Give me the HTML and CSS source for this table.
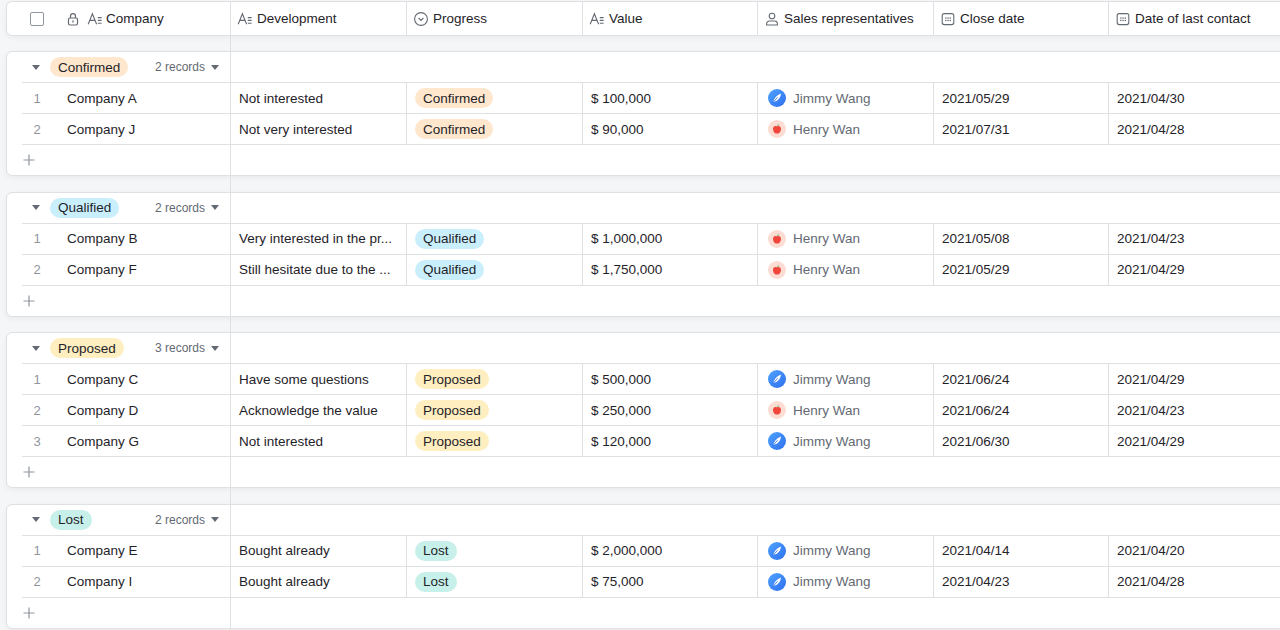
FILE: index.html
```html
<!DOCTYPE html>
<html lang="en">
<head>
<meta charset="utf-8">
<title>Sales pipeline</title>
<link rel="stylesheet" href="styles.css">
</head>
<body>
<div class="sheet">
  <div class="head">
    <div class="hl">
      <span class="chk"></span>
      <svg class="lock" width="12" height="14" viewBox="0 0 12 14"><rect x="1.5" y="6" width="9" height="7" rx="1.5" fill="none" stroke="#646a73" stroke-width="1.2"/><path d="M3.5 6V4.2a2.5 2.5 0 0 1 5 0V6" fill="none" stroke="#646a73" stroke-width="1.2"/><rect x="5.4" y="8.4" width="1.2" height="2.2" fill="#646a73"/></svg>
      <svg class="ic" width="16" height="16" viewBox="0 0 16 16"><path d="M1.2 13.2L5.4 2.8L9.6 13.2M2.8 9.4H8" fill="none" stroke="#646a73" stroke-width="1.1"/><path d="M10.8 6.6H14.6M10.8 9.4H14.6M10.8 12.2H14.6" stroke="#646a73" stroke-width="1.1"/></svg>
      <span>Company</span>
    </div>
    <div class="hc w177">
      <svg class="ic" width="16" height="16" viewBox="0 0 16 16"><path d="M1.2 13.2L5.4 2.8L9.6 13.2M2.8 9.4H8" fill="none" stroke="#646a73" stroke-width="1.1"/><path d="M10.8 6.6H14.6M10.8 9.4H14.6M10.8 12.2H14.6" stroke="#646a73" stroke-width="1.1"/></svg>
      <span>Development</span>
    </div>
    <div class="hc w176">
      <svg class="ic" width="16" height="16" viewBox="0 0 16 16"><circle cx="8" cy="8" r="6.4" fill="none" stroke="#646a73" stroke-width="1.1"/><path d="M5.6 7L8 9.4L10.4 7" fill="none" stroke="#646a73" stroke-width="1.1"/></svg>
      <span>Progress</span>
    </div>
    <div class="hc w175">
      <svg class="ic" width="16" height="16" viewBox="0 0 16 16"><path d="M1.2 13.2L5.4 2.8L9.6 13.2M2.8 9.4H8" fill="none" stroke="#646a73" stroke-width="1.1"/><path d="M10.8 6.6H14.6M10.8 9.4H14.6M10.8 12.2H14.6" stroke="#646a73" stroke-width="1.1"/></svg>
      <span>Value</span>
    </div>
    <div class="hc w176">
      <svg class="ic" width="16" height="16" viewBox="0 0 16 16"><circle cx="8" cy="5" r="2.8" fill="none" stroke="#646a73" stroke-width="1.1"/><path d="M2.6 14V12.8a2.8 2.8 0 0 1 2.8-2.8h5.2a2.8 2.8 0 0 1 2.8 2.8V14Z" fill="none" stroke="#646a73" stroke-width="1.1"/></svg>
      <span>Sales representatives</span>
    </div>
    <div class="hc w175">
      <svg class="ic" width="16" height="16" viewBox="0 0 16 16"><rect x="2.2" y="2.6" width="11.6" height="11" rx="2" fill="none" stroke="#646a73" stroke-width="1.1"/><g fill="#646a73"><rect x="5.2" y="6.4" width="1.3" height="1.3"/><rect x="7.4" y="6.4" width="1.3" height="1.3"/><rect x="9.6" y="6.4" width="1.3" height="1.3"/><rect x="5.2" y="8.8" width="1.3" height="1.3"/><rect x="7.4" y="8.8" width="1.3" height="1.3"/><rect x="9.6" y="8.8" width="1.3" height="1.3"/></g></svg>
      <span>Close date</span>
    </div>
    <div class="hc wrest">
      <svg class="ic" width="16" height="16" viewBox="0 0 16 16"><rect x="2.2" y="2.6" width="11.6" height="11" rx="2" fill="none" stroke="#646a73" stroke-width="1.1"/><g fill="#646a73"><rect x="5.2" y="6.4" width="1.3" height="1.3"/><rect x="7.4" y="6.4" width="1.3" height="1.3"/><rect x="9.6" y="6.4" width="1.3" height="1.3"/><rect x="5.2" y="8.8" width="1.3" height="1.3"/><rect x="7.4" y="8.8" width="1.3" height="1.3"/><rect x="9.6" y="8.8" width="1.3" height="1.3"/></g></svg>
      <span>Date of last contact</span>
    </div>
  </div>

  <!-- Group: Confirmed -->
  <div class="group">
    <div class="ghead">
      <div class="gl">
        <svg class="caret" width="8" height="5" viewBox="0 0 8 5"><path d="M0 0H8L4 5Z" fill="#646a73"/></svg>
        <span class="pill confirmed">Confirmed</span>
        <span class="records">2 records</span>
        <svg class="caret2" width="8" height="5" viewBox="0 0 8 5"><path d="M0 0H8L4 5Z" fill="#646a73"/></svg>
      </div>
    </div>
    <div class="row">
      <div class="lc"><span class="num">1</span><span class="name">Company A</span></div>
      <div class="c w177 dev">Not interested</div>
      <div class="c w176"><span class="pill confirmed">Confirmed</span></div>
      <div class="c w175">$ 100,000</div>
      <div class="c w176 rep"><span class="av jimmy"><svg width="18" height="18" viewBox="0 0 18 18"><path d="M5.2 13.2C6 9.4 8.6 6 13 4.4C12.6 8.6 10 11.8 6.4 12.6Z" fill="#fff"/><path d="M4.6 14L9.6 8.2" stroke="#2f6fe8" stroke-width="0.8"/></svg></span>Jimmy Wang</div>
      <div class="c w175">2021/05/29</div>
      <div class="c wrest">2021/04/30</div>
    </div>
    <div class="row">
      <div class="lc"><span class="num">2</span><span class="name">Company J</span></div>
      <div class="c w177 dev">Not very interested</div>
      <div class="c w176"><span class="pill confirmed">Confirmed</span></div>
      <div class="c w175">$ 90,000</div>
      <div class="c w176 rep"><span class="av henry"><svg width="18" height="18" viewBox="0 0 18 18"><path d="M9 6.4C7.2 5.3 5 6.2 5 9C5 11.6 6.8 13.6 8.1 13.6C8.6 13.6 8.8 13.4 9 13.4C9.2 13.4 9.4 13.6 9.9 13.6C11.2 13.6 13 11.6 13 9C13 6.2 10.8 5.3 9 6.4Z" fill="#f0463b"/><path d="M9 6.4C9.2 5.3 9.9 4.4 11 4.2C10.8 5.3 10.1 6 9 6.4Z" fill="#3aa655"/></svg></span>Henry Wan</div>
      <div class="c w175">2021/07/31</div>
      <div class="c wrest">2021/04/28</div>
    </div>
    <div class="addrow">
      <div class="al"><svg width="12" height="12" viewBox="0 0 12 12"><path d="M6 0.5V11.5M0.5 6H11.5" stroke="#8f959e" stroke-width="1.2"/></svg></div>
      <div class="ar"></div>
    </div>
  </div>

  <!-- Group: Qualified -->
  <div class="group">
    <div class="ghead">
      <div class="gl">
        <svg class="caret" width="8" height="5" viewBox="0 0 8 5"><path d="M0 0H8L4 5Z" fill="#646a73"/></svg>
        <span class="pill qualified">Qualified</span>
        <span class="records">2 records</span>
        <svg class="caret2" width="8" height="5" viewBox="0 0 8 5"><path d="M0 0H8L4 5Z" fill="#646a73"/></svg>
      </div>
    </div>
    <div class="row">
      <div class="lc"><span class="num">1</span><span class="name">Company B</span></div>
      <div class="c w177 dev">Very interested in the pr...</div>
      <div class="c w176"><span class="pill qualified">Qualified</span></div>
      <div class="c w175">$ 1,000,000</div>
      <div class="c w176 rep"><span class="av henry"><svg width="18" height="18" viewBox="0 0 18 18"><path d="M9 6.4C7.2 5.3 5 6.2 5 9C5 11.6 6.8 13.6 8.1 13.6C8.6 13.6 8.8 13.4 9 13.4C9.2 13.4 9.4 13.6 9.9 13.6C11.2 13.6 13 11.6 13 9C13 6.2 10.8 5.3 9 6.4Z" fill="#f0463b"/><path d="M9 6.4C9.2 5.3 9.9 4.4 11 4.2C10.8 5.3 10.1 6 9 6.4Z" fill="#3aa655"/></svg></span>Henry Wan</div>
      <div class="c w175">2021/05/08</div>
      <div class="c wrest">2021/04/23</div>
    </div>
    <div class="row">
      <div class="lc"><span class="num">2</span><span class="name">Company F</span></div>
      <div class="c w177 dev">Still hesitate due to the ...</div>
      <div class="c w176"><span class="pill qualified">Qualified</span></div>
      <div class="c w175">$ 1,750,000</div>
      <div class="c w176 rep"><span class="av henry"><svg width="18" height="18" viewBox="0 0 18 18"><path d="M9 6.4C7.2 5.3 5 6.2 5 9C5 11.6 6.8 13.6 8.1 13.6C8.6 13.6 8.8 13.4 9 13.4C9.2 13.4 9.4 13.6 9.9 13.6C11.2 13.6 13 11.6 13 9C13 6.2 10.8 5.3 9 6.4Z" fill="#f0463b"/><path d="M9 6.4C9.2 5.3 9.9 4.4 11 4.2C10.8 5.3 10.1 6 9 6.4Z" fill="#3aa655"/></svg></span>Henry Wan</div>
      <div class="c w175">2021/05/29</div>
      <div class="c wrest">2021/04/29</div>
    </div>
    <div class="addrow">
      <div class="al"><svg width="12" height="12" viewBox="0 0 12 12"><path d="M6 0.5V11.5M0.5 6H11.5" stroke="#8f959e" stroke-width="1.2"/></svg></div>
      <div class="ar"></div>
    </div>
  </div>

  <!-- Group: Proposed -->
  <div class="group">
    <div class="ghead">
      <div class="gl">
        <svg class="caret" width="8" height="5" viewBox="0 0 8 5"><path d="M0 0H8L4 5Z" fill="#646a73"/></svg>
        <span class="pill proposed">Proposed</span>
        <span class="records">3 records</span>
        <svg class="caret2" width="8" height="5" viewBox="0 0 8 5"><path d="M0 0H8L4 5Z" fill="#646a73"/></svg>
      </div>
    </div>
    <div class="row">
      <div class="lc"><span class="num">1</span><span class="name">Company C</span></div>
      <div class="c w177 dev">Have some questions</div>
      <div class="c w176"><span class="pill proposed">Proposed</span></div>
      <div class="c w175">$ 500,000</div>
      <div class="c w176 rep"><span class="av jimmy"><svg width="18" height="18" viewBox="0 0 18 18"><path d="M5.2 13.2C6 9.4 8.6 6 13 4.4C12.6 8.6 10 11.8 6.4 12.6Z" fill="#fff"/><path d="M4.6 14L9.6 8.2" stroke="#2f6fe8" stroke-width="0.8"/></svg></span>Jimmy Wang</div>
      <div class="c w175">2021/06/24</div>
      <div class="c wrest">2021/04/29</div>
    </div>
    <div class="row">
      <div class="lc"><span class="num">2</span><span class="name">Company D</span></div>
      <div class="c w177 dev">Acknowledge the value</div>
      <div class="c w176"><span class="pill proposed">Proposed</span></div>
      <div class="c w175">$ 250,000</div>
      <div class="c w176 rep"><span class="av henry"><svg width="18" height="18" viewBox="0 0 18 18"><path d="M9 6.4C7.2 5.3 5 6.2 5 9C5 11.6 6.8 13.6 8.1 13.6C8.6 13.6 8.8 13.4 9 13.4C9.2 13.4 9.4 13.6 9.9 13.6C11.2 13.6 13 11.6 13 9C13 6.2 10.8 5.3 9 6.4Z" fill="#f0463b"/><path d="M9 6.4C9.2 5.3 9.9 4.4 11 4.2C10.8 5.3 10.1 6 9 6.4Z" fill="#3aa655"/></svg></span>Henry Wan</div>
      <div class="c w175">2021/06/24</div>
      <div class="c wrest">2021/04/23</div>
    </div>
    <div class="row">
      <div class="lc"><span class="num">3</span><span class="name">Company G</span></div>
      <div class="c w177 dev">Not interested</div>
      <div class="c w176"><span class="pill proposed">Proposed</span></div>
      <div class="c w175">$ 120,000</div>
      <div class="c w176 rep"><span class="av jimmy"><svg width="18" height="18" viewBox="0 0 18 18"><path d="M5.2 13.2C6 9.4 8.6 6 13 4.4C12.6 8.6 10 11.8 6.4 12.6Z" fill="#fff"/><path d="M4.6 14L9.6 8.2" stroke="#2f6fe8" stroke-width="0.8"/></svg></span>Jimmy Wang</div>
      <div class="c w175">2021/06/30</div>
      <div class="c wrest">2021/04/29</div>
    </div>
    <div class="addrow">
      <div class="al"><svg width="12" height="12" viewBox="0 0 12 12"><path d="M6 0.5V11.5M0.5 6H11.5" stroke="#8f959e" stroke-width="1.2"/></svg></div>
      <div class="ar"></div>
    </div>
  </div>

  <!-- Group: Lost -->
  <div class="group">
    <div class="ghead">
      <div class="gl">
        <svg class="caret" width="8" height="5" viewBox="0 0 8 5"><path d="M0 0H8L4 5Z" fill="#646a73"/></svg>
        <span class="pill lost">Lost</span>
        <span class="records">2 records</span>
        <svg class="caret2" width="8" height="5" viewBox="0 0 8 5"><path d="M0 0H8L4 5Z" fill="#646a73"/></svg>
      </div>
    </div>
    <div class="row">
      <div class="lc"><span class="num">1</span><span class="name">Company E</span></div>
      <div class="c w177 dev">Bought already</div>
      <div class="c w176"><span class="pill lost">Lost</span></div>
      <div class="c w175">$ 2,000,000</div>
      <div class="c w176 rep"><span class="av jimmy"><svg width="18" height="18" viewBox="0 0 18 18"><path d="M5.2 13.2C6 9.4 8.6 6 13 4.4C12.6 8.6 10 11.8 6.4 12.6Z" fill="#fff"/><path d="M4.6 14L9.6 8.2" stroke="#2f6fe8" stroke-width="0.8"/></svg></span>Jimmy Wang</div>
      <div class="c w175">2021/04/14</div>
      <div class="c wrest">2021/04/20</div>
    </div>
    <div class="row">
      <div class="lc"><span class="num">2</span><span class="name">Company I</span></div>
      <div class="c w177 dev">Bought already</div>
      <div class="c w176"><span class="pill lost">Lost</span></div>
      <div class="c w175">$ 75,000</div>
      <div class="c w176 rep"><span class="av jimmy"><svg width="18" height="18" viewBox="0 0 18 18"><path d="M5.2 13.2C6 9.4 8.6 6 13 4.4C12.6 8.6 10 11.8 6.4 12.6Z" fill="#fff"/><path d="M4.6 14L9.6 8.2" stroke="#2f6fe8" stroke-width="0.8"/></svg></span>Jimmy Wang</div>
      <div class="c w175">2021/04/23</div>
      <div class="c wrest">2021/04/28</div>
    </div>
    <div class="addrow">
      <div class="al"><svg width="12" height="12" viewBox="0 0 12 12"><path d="M6 0.5V11.5M0.5 6H11.5" stroke="#8f959e" stroke-width="1.2"/></svg></div>
      <div class="ar"></div>
    </div>
  </div>
</div>
</body>
</html>
```
FILE: styles.css
```css
html, body {
  margin: 0;
  padding: 0;
}
body {
  width: 1280px;
  height: 630px;
  overflow: hidden;
  background: #f5f6f7;
  font-family: "Liberation Sans", Arial, sans-serif;
  font-size: 13.5px;
  color: #1f2329;
}
.sheet {
  position: relative;
  width: 1320px;
  height: 630px;
  padding: 1px 0 0 6px;
  box-sizing: border-box;
}
.sheet::before {
  content: "";
  position: absolute;
  left: 230px;
  top: 1px;
  bottom: 0;
  width: 1px;
  background: #dee0e3;
  z-index: 3;
}

/* header */
.head {
  display: flex;
  height: 35px;
  box-sizing: border-box;
  background: #fff;
  border: 1px solid #dee0e3;
  border-radius: 6px;
  box-shadow: 0 2px 5px rgba(31, 35, 41, 0.05);
}
.hl {
  width: 223px;
  flex: none;
  display: flex;
  align-items: center;
  padding-left: 23px;
  box-sizing: border-box;
}
.chk {
  width: 12px;
  height: 12px;
  border: 1px solid #8f959e;
  border-radius: 2px;
  margin-right: 23px;
}
.lock {
  margin-right: 8px;
}
.hl .ic {
  margin-right: 3px;
}
.hc {
  flex: none;
  display: flex;
  align-items: center;
  gap: 4px;
  padding-left: 6px;
  box-sizing: border-box;
  border-right: 1px solid #dee0e3;
  white-space: nowrap;
}
.hc.w177 { padding-left: 7px; }
.w177 { width: 177px; }
.w176 { width: 176px; }
.w175 { width: 175px; }
.wrest { width: 200px; flex: none; }

/* groups */
.group {
  margin-top: 15.5px;
  background: #fff;
  border: 1px solid #dee0e3;
  border-radius: 6px;
  box-shadow: 0 2px 5px rgba(31, 35, 41, 0.05);
}
.head + .group {
  margin-top: 15px;
}
.ghead {
  height: 30px;
  display: flex;
}
.gl {
  width: 223px;
  display: flex;
  align-items: center;
  padding-left: 25px;
  padding-right: 11px;
  box-sizing: border-box;
}
.caret {
  margin-right: 10px;
}
.records {
  margin-left: auto;
  font-size: 12px;
  color: #646a73;
  margin-right: 6px;
}
.pill {
  display: inline-flex;
  align-items: center;
  height: 20px;
  padding: 0 8px;
  border-radius: 10px;
  font-size: 13.5px;
  color: #1f2329;
  white-space: nowrap;
}
.pill.confirmed { background: #fee7cd; }
.pill.qualified { background: #caeffc; }
.pill.proposed { background: #feeec0; }
.pill.lost { background: #c7f0ea; }

.row {
  display: flex;
  height: 31px;
}
.lc {
  width: 208px;
  margin-left: 15px;
  flex: none;
  border-top: 1px solid #dee0e3;
  display: flex;
  align-items: center;
  box-sizing: border-box;
}
.num {
  width: 30px;
  text-align: center;
  color: #8f959e;
  font-size: 13px;
}
.name {
  padding-left: 15px;
}
.c {
  flex: none;
  box-sizing: border-box;
  border-top: 1px solid #dee0e3;
  border-right: 1px solid #dee0e3;
  display: flex;
  align-items: center;
  padding: 0 8px;
  white-space: nowrap;
}
.c.wrest { border-right: none; }
.c.dev {
  padding: 0 9px;
}
.rep {
  color: #646a73;
  padding-left: 10px;
}
.av {
  width: 18px;
  height: 18px;
  border-radius: 50%;
  margin-right: 7px;
  display: inline-flex;
  flex: none;
}
.av.jimmy {
  background: linear-gradient(135deg, #4fa3ff 0%, #2e6ff0 100%);
}
.av.henry {
  background: #fcdcd3;
}

.addrow {
  display: flex;
  height: 31px;
}
.al {
  width: 208px;
  margin-left: 15px;
  flex: none;
  border-top: 1px solid #dee0e3;
  display: flex;
  align-items: center;
  padding-left: 1px;
  box-sizing: border-box;
}
.ar {
  flex: 1;
  border-top: 1px solid #dee0e3;
}
```
